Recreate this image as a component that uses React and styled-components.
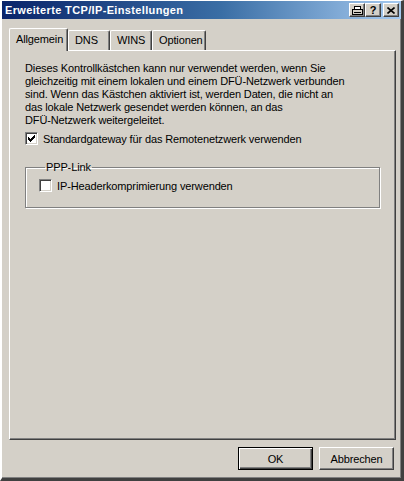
import React, { useState } from "react";
import styled, { createGlobalStyle } from "styled-components";

const GlobalStyle = createGlobalStyle`
  html, body {
    margin: 0;
    padding: 0;
    background: #d4d0c8;
  }
  * {
    box-sizing: border-box;
  }
`;

const Window = styled.div`
  width: 404px;
  height: 481px;
  display: flex;
  flex-direction: column;
  background: #d4d0c8;
  border-top: 1px solid #ffffff;
  border-left: 2px solid #ffffff;
  border-right: 3px solid #404040;
  border-bottom: 3px solid #404040;
  box-shadow: inset -1px -1px #808080;
  font-family: "Liberation Sans", Arial, sans-serif;
  font-size: 11px;
  letter-spacing: -0.13px;
  color: #000;
`;

const TitleBar = styled.div`
  height: 18px;
  display: flex;
  align-items: center;
  padding: 0 2px 0 3px;
  background: linear-gradient(to right, #0a246a 0%, #3a6ea5 55%, #a6caf0 100%);
`;

const Title = styled.div`
  flex: 1;
  color: #ffffff;
  font-weight: bold;
  font-size: 11px;
  letter-spacing: 0.35px;
`;

const CaptionButton = styled.div`
  width: 16px;
  height: 14px;
  display: flex;
  align-items: center;
  justify-content: center;
  background: #d4d0c8;
  border-top: 1px solid #ffffff;
  border-left: 1px solid #ffffff;
  border-right: 1px solid #404040;
  border-bottom: 1px solid #404040;
  box-shadow: inset -1px -1px #808080;
  margin-left: ${({ gap }) => gap || 0}px;
  font-weight: bold;
  font-size: 11px;
  line-height: 1;
`;

const Body = styled.div`
  flex: 1;
  display: flex;
  flex-direction: column;
  margin: 9px 5px 0 7px;
`;

const TabRow = styled.div`
  height: 22px;
  display: flex;
  align-items: flex-end;
`;

const Tab = styled.div`
  position: relative;
  width: ${({ w }) => w}px;
  height: ${({ active }) => (active ? 23 : 20)}px;
  margin-bottom: ${({ active }) => (active ? -1 : 0)}px;
  padding: ${({ active }) => (active ? "4px 0 0 6px" : "3px 0 0 6px")};
  background: #d4d0c8;
  border-top: 1px solid #ffffff;
  border-left: 1px solid #ffffff;
  border-right: 1px solid #404040;
  border-radius: 2px 2px 0 0;
  box-shadow: inset -1px 0 #808080;
  white-space: nowrap;
  overflow: hidden;
  z-index: ${({ active }) => (active ? 2 : 1)};
  cursor: default;
`;

const Panel = styled.div`
  flex: 1;
  position: relative;
  z-index: 1;
  border-top: 1px solid #ffffff;
  border-left: 1px solid #ffffff;
  border-right: 1px solid #404040;
  border-bottom: 1px solid #404040;
  box-shadow: inset -1px -1px #808080;
  padding: 11px 15px 0 15px;
`;

const Paragraph = styled.div`
  line-height: 13px;
`;

const CheckRow = styled.label`
  display: flex;
  align-items: center;
  gap: 5px;
  height: 13px;
  margin-top: ${({ top }) => top || 0}px;
`;

const Box = styled.span`
  width: 13px;
  height: 13px;
  display: flex;
  align-items: center;
  justify-content: center;
  background: #ffffff;
  border-top: 1px solid #808080;
  border-left: 1px solid #808080;
  border-right: 1px solid #ffffff;
  border-bottom: 1px solid #ffffff;
  box-shadow: inset 1px 1px #404040, inset -1px -1px #d4d0c8;
`;

const Group = styled.fieldset`
  margin: 16px 0 0 0;
  padding: 5px 13px 15px 13px;
  border: 1px solid #808080;
  box-shadow: inset 1px 1px #ffffff, 1px 1px #ffffff;
`;

const Legend = styled.legend`
  padding: 0 1px;
  margin-left: 6px;
  line-height: 13px;
`;

const Footer = styled.div`
  display: flex;
  justify-content: flex-end;
  gap: 6px;
  padding: 7px 7px 8px 0;
`;

const Button = styled.div`
  width: 75px;
  height: 23px;
  display: flex;
  align-items: center;
  justify-content: center;
  background: #d4d0c8;
  ${({ primary }) =>
    primary
      ? `
    border: 1px solid #000000;
    box-shadow: inset 1px 1px #ffffff, inset -1px -1px #404040, inset -2px -2px #808080;
  `
      : `
    border-top: 1px solid #ffffff;
    border-left: 1px solid #ffffff;
    border-right: 1px solid #404040;
    border-bottom: 1px solid #404040;
    box-shadow: inset -1px -1px #808080;
  `}
`;

const Check = () => (
  <svg width="7" height="7" viewBox="0 0 7 7" shapeRendering="crispEdges">
    <path
      d="M0 2h1v3h-1zM1 3h1v3h-1zM2 4h1v3h-1zM3 3h1v3h-1zM4 2h1v3h-1zM5 1h1v3h-1zM6 0h1v3h-1z"
      fill="#000"
    />
  </svg>
);

const PrinterIcon = () => (
  <svg width="11" height="9" viewBox="0 0 11 9" shapeRendering="crispEdges">
    <rect x="2.5" y="0.5" width="6" height="3" fill="#fff" stroke="#000" />
    <rect x="0.5" y="3.5" width="10" height="5" fill="#d4d0c8" stroke="#000" />
    <rect x="2" y="6" width="7" height="1" fill="#000" />
  </svg>
);

const CloseIcon = () => (
  <svg width="8" height="7" viewBox="0 0 8 7">
    <path d="M0.5 0.5L7.5 6.5M7.5 0.5L0.5 6.5" stroke="#000" strokeWidth="1.6" />
  </svg>
);

const tabs = [
  { label: "Allgemein", w: 59 },
  { label: "DNS", w: 42 },
  { label: "WINS", w: 42 },
  { label: "Optionen", w: 54 },
];

const App = () => {
  const [active, setActive] = useState("Allgemein");
  const [gateway, setGateway] = useState(true);
  const [header, setHeader] = useState(false);

  return (
    <>
      <GlobalStyle />
      <Window>
        <TitleBar>
          <Title>Erweiterte TCP/IP-Einstellungen</Title>
          <CaptionButton>
            <PrinterIcon />
          </CaptionButton>
          <CaptionButton>?</CaptionButton>
          <CaptionButton gap={2}>
            <CloseIcon />
          </CaptionButton>
        </TitleBar>

        <Body>
          <TabRow>
            {tabs.map((t) => (
              <Tab
                key={t.label}
                w={t.w}
                active={active === t.label}
                onClick={() => setActive(t.label)}
              >
                {t.label}
              </Tab>
            ))}
          </TabRow>

          <Panel>
            <Paragraph>
              Dieses Kontrollkästchen kann nur verwendet werden, wenn Sie
              <br />
              gleichzeitig mit einem lokalen und einem DFÜ-Netzwerk verbunden
              <br />
              sind. Wenn das Kästchen aktiviert ist, werden Daten, die nicht an
              <br />
              das lokale Netzwerk gesendet werden können, an das
              <br />
              DFÜ-Netzwerk weitergeleitet.
            </Paragraph>
            <CheckRow top={5} onClick={() => setGateway(!gateway)}>
              <Box>{gateway && <Check />}</Box>
              Standardgateway für das Remotenetzwerk verwenden
            </CheckRow>

            <Group>
              <Legend>PPP-Link</Legend>
              <CheckRow onClick={() => setHeader(!header)}>
                <Box>{header && <Check />}</Box>
                IP-Headerkomprimierung verwenden
              </CheckRow>
            </Group>
          </Panel>
        </Body>

        <Footer>
          <Button primary>OK</Button>
          <Button>Abbrechen</Button>
        </Footer>
      </Window>
    </>
  );
};

export default App;
